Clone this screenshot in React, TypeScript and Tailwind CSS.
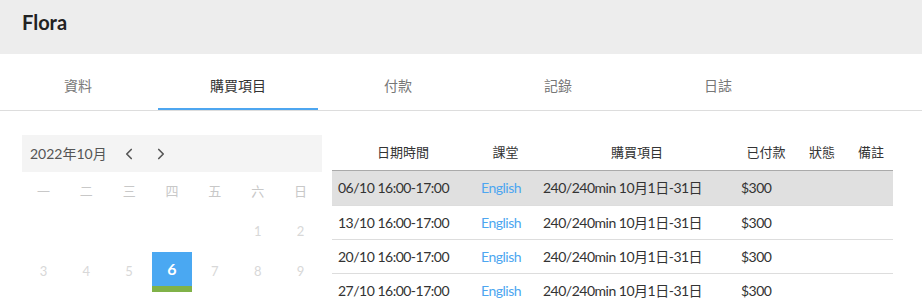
import { ChevronLeft, ChevronRight } from "lucide-react";

const tabs = ["資料", "購買項目", "付款", "記錄", "日誌"];
const weekdays = ["一", "二", "三", "四", "五", "六", "日"];
const days: (number | null)[] = [null, null, null, null, null, 1, 2, 3, 4, 5, 6, 7, 8, 9];

const rows = [
  { date: "06/10 16:00-17:00", active: true },
  { date: "13/10 16:00-17:00", active: false },
  { date: "20/10 16:00-17:00", active: false },
  { date: "27/10 16:00-17:00", active: false },
];

export default function App() {
  return (
    <div
      className="w-[922px] h-[304px] overflow-hidden bg-white text-[#333]"
      style={{ fontFamily: 'Lato, "Noto Sans CJK TC", sans-serif' }}
    >
      {/* 上方標題 */}
      <div className="h-[54px] bg-[#ededed] px-[22px] pt-[8px]">
        <h1 className="text-[20px] leading-[28px] font-bold text-[#222]">Flora</h1>
      </div>

      {/* 分頁 */}
      <div className="flex h-[57px] border-b border-[#dddddd] -ml-[2px]">
        {tabs.map((t, i) => (
          <div
            key={t}
            className={
              i === 1
                ? "w-[160px] h-[56px] pt-[22px] text-center text-[14px] leading-[20px] text-[#333] border-b-2 border-[#4da6f0]"
                : "w-[160px] h-[56px] pt-[22px] text-center text-[14px] leading-[20px] text-[#777]"
            }
          >
            {t}
          </div>
        ))}
      </div>

      <div className="flex gap-[10px] pl-[22px] pt-[24px]">
        {/* 月曆 */}
        <div className="w-[300px] shrink-0">
          <div className="h-[37px] bg-[#f4f4f4] flex items-center pl-[8px] text-[#555]">
            <span className="text-[14px]">2022年10月</span>
            <ChevronLeft className="ml-[13px]" size={18} strokeWidth={2.2} />
            <ChevronRight className="ml-[14px]" size={18} strokeWidth={2.2} />
          </div>
          <div className="grid grid-cols-7">
            {weekdays.map((w) => (
              <div key={w} className="h-[40px] flex items-center justify-center text-[13px] text-[#c8c8c8]">
                {w}
              </div>
            ))}
            {days.map((d, i) => (
              <div key={i} className="h-[40px] flex items-center justify-center">
                {d === 6 ? (
                  <div className="w-[40px] h-[40px] flex flex-col">
                    <div className="h-[34px] bg-[#4aa8f2] flex items-center justify-center text-white text-[16px] font-bold">
                      6
                    </div>
                    <div className="h-[6px] bg-[#80b248]" />
                  </div>
                ) : (
                  <span className="text-[13px] text-[#d8d8d8]">{d ?? ""}</span>
                )}
              </div>
            ))}
          </div>
        </div>

        {/* 購買紀錄表 */}
        <table className="w-[561px] table-fixed border-collapse text-[14px] tracking-[-0.5px]">
          <colgroup>
            <col className="w-[142px]" />
            <col className="w-[63px]" />
            <col className="w-[200px]" />
            <col className="w-[58px]" />
            <col className="w-[54px]" />
            <col className="w-[44px]" />
          </colgroup>
          <thead>
            <tr className="h-[35px] border-b border-[#aaaaaa]">
              {["日期時間", "課堂", "購買項目", "已付款", "狀態", "備註"].map((h) => (
                <th key={h} className="font-normal text-center text-[13px] tracking-normal text-[#333] whitespace-nowrap">
                  {h}
                </th>
              ))}
            </tr>
          </thead>
          <tbody>
            {rows.map((r) => (
              <tr
                key={r.date}
                className={r.active ? "h-[35px] bg-[#e0e0e0]" : "h-[34px] border-t border-[#dddddd]"}
              >
                <td className="pl-[6px] whitespace-nowrap text-[#333]">{r.date}</td>
                <td className="pl-[7px] text-[#4da6f0]">English</td>
                <td className="pl-[6px] whitespace-nowrap text-[#333]">240/240min 10月1日-31日</td>
                <td className="pl-[4px] text-[#333]">$300</td>
                <td></td>
                <td></td>
              </tr>
            ))}
          </tbody>
        </table>
      </div>
    </div>
  );
}
